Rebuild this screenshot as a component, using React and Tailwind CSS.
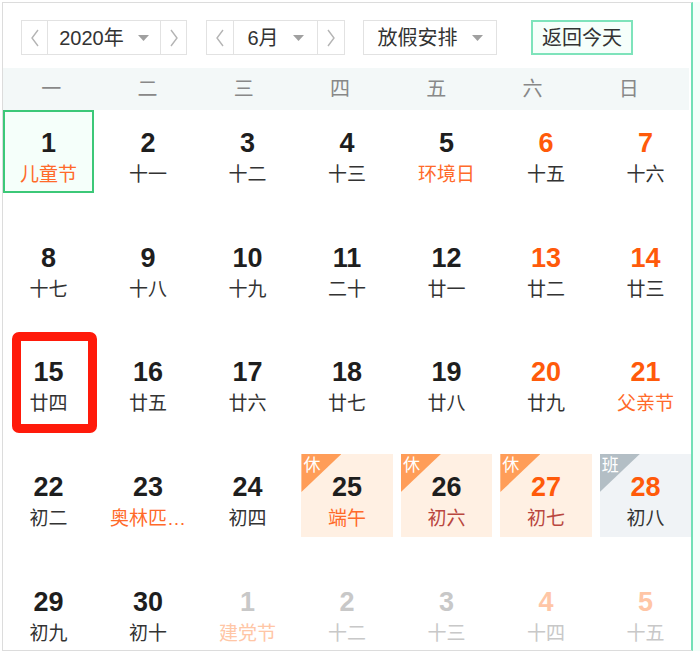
import React from 'react'

const weekDays = ['一', '二', '三', '四', '五', '六', '日']

const days = [
  { n: 1, l: '儿童节', fest: true, today: true },
  { n: 2, l: '十一' },
  { n: 3, l: '十二' },
  { n: 4, l: '十三' },
  { n: 5, l: '环境日', fest: true },
  { n: 6, l: '十五', weekend: true },
  { n: 7, l: '十六', weekend: true },
  { n: 8, l: '十七' },
  { n: 9, l: '十八' },
  { n: 10, l: '十九' },
  { n: 11, l: '二十' },
  { n: 12, l: '廿一' },
  { n: 13, l: '廿二', weekend: true },
  { n: 14, l: '廿三', weekend: true },
  { n: 15, l: '廿四' },
  { n: 16, l: '廿五' },
  { n: 17, l: '廿六' },
  { n: 18, l: '廿七' },
  { n: 19, l: '廿八' },
  { n: 20, l: '廿九', weekend: true },
  { n: 21, l: '父亲节', fest: true, weekend: true },
  { n: 22, l: '初二' },
  { n: 23, l: '奥林匹…', fest: true },
  { n: 24, l: '初四' },
  { n: 25, l: '端午', fest: true, badge: 'rest' },
  { n: 26, l: '初六', badge: 'rest' },
  { n: 27, l: '初七', weekend: true, badge: 'rest' },
  { n: 28, l: '初八', weekend: true, badge: 'work' },
  { n: 29, l: '初九' },
  { n: 30, l: '初十' },
  { n: 1, l: '建党节', next: true, fest: true },
  { n: 2, l: '十二', next: true },
  { n: 3, l: '十三', next: true },
  { n: 4, l: '十四', next: true, weekend: true },
  { n: 5, l: '十五', next: true, weekend: true },
]

const Chevron = ({ dir }) => (
  <svg width="10" height="20" viewBox="0 0 10 20">
    {dir === 'left' ? (
      <polyline points="8,2 2,10 8,18" fill="none" stroke="#b4b4b4" strokeWidth="1.4" />
    ) : (
      <polyline points="2,2 8,10 2,18" fill="none" stroke="#b4b4b4" strokeWidth="1.4" />
    )}
  </svg>
)

const Caret = () => (
  <svg width="11" height="6" viewBox="0 0 11 6">
    <polygon points="0,0 11,0 5.5,6" fill="#a0a0a0" />
  </svg>
)

const Stepper = ({ label, widths }) => (
  <div className="flex h-[35px] border border-[#e2e2e2] bg-white">
    <div className={`${widths[0]} flex items-center justify-center border-r border-[#e2e2e2]`}>
      <Chevron dir="left" />
    </div>
    <div className={`${widths[1]} flex items-center justify-center gap-[14px] border-r border-[#e2e2e2]`}>
      <span className="text-[20px] text-[#333]">{label}</span>
      <Caret />
    </div>
    <div className={`${widths[2]} flex items-center justify-center`}>
      <Chevron dir="right" />
    </div>
  </div>
)

const Cell = ({ day }) => {
  var numColor = 'text-[#1e1e1e]'
  var lunarColor = 'text-[#333]'
  if (day.weekend) numColor = 'text-[#ff5a0a]'
  if (day.fest) lunarColor = 'text-[#ff6a2a]'
  if (day.next) {
    numColor = day.weekend ? 'text-[#ffc6a6]' : 'text-[#c8c8c8]'
    lunarColor = day.fest ? 'text-[#ffc6a6]' : 'text-[#c8c8c8]'
  }
  if (day.badge === 'rest' && !day.fest) lunarColor = 'text-[#b9473f]'

  var box = 'bg-transparent'
  if (day.today) box = 'border-2 border-[#3cc878] bg-[#f5fffa]'
  if (day.badge === 'rest') box = 'bg-[#fff0e3]'
  if (day.badge === 'work') box = 'bg-[#f0f3f6]'

  return (
    <div className={`relative h-[83px] flex flex-col items-center ${day.today ? 'pt-[16px]' : 'pt-[18px]'} ${box}`}>
      {day.badge && (
        <div
          className={`absolute left-0 top-0 w-[40px] h-[38px] [clip-path:polygon(0_0,100%_0,0_100%)] ${
            day.badge === 'rest' ? 'bg-[#ff9d58]' : 'bg-[#b3bec5]'
          }`}
        >
          <span className="absolute left-[2px] top-[2px] text-[17px] leading-[20px] text-white">
            {day.badge === 'rest' ? '休' : '班'}
          </span>
        </div>
      )}
      <span className={`text-[27px] leading-[30px] font-bold ${numColor}`}>{day.n}</span>
      <span className={`mt-[5px] text-[19px] leading-[24px] whitespace-nowrap ${lunarColor}`}>{day.l}</span>
    </div>
  )
}

const App = () => {
  return (
    <div
      className="relative flex w-[700px] h-[653px] bg-white overflow-hidden"
      style={{ fontFamily: '"Liberation Sans", "Noto Sans CJK SC", sans-serif' }}
    >
      <div className="mt-[2px] ml-[2px] w-[691px] h-[649px] shrink-0 overflow-hidden border-l border-t border-b border-[#dcdcdc] border-r-2 border-r-[#72e0b6]">
        {/* toolbar */}
        <div className="flex items-center pl-[18px] pt-[17px]">
          <Stepper label="2020年" widths={['w-[26px]', 'w-[113px]', 'w-[25px]']} />
          <div className="ml-[19px]">
            <Stepper label="6月" widths={['w-[27px]', 'w-[84px]', 'w-[26px]']} />
          </div>
          <div className="ml-[18px] w-[134px] h-[35px] flex items-center justify-center gap-[14px] border border-[#e2e2e2]">
            <span className="text-[20px] text-[#333]">放假安排</span>
            <Caret />
          </div>
          <button className="ml-[34px] w-[102px] h-[35px] flex items-center justify-center border-2 border-[#7ee3bb] bg-[#f6fffb] text-[20px] text-[#333]">
            返回今天
          </button>
        </div>

        {/* week header */}
        <div className="mt-[13px] h-[42px] w-[686px] bg-[#f3f8f8]">
          <div className="grid grid-cols-7 w-[674px] h-full items-center">
            {weekDays.map(w => (
              <div key={w} className="text-center text-[20px] text-[#888]">{w}</div>
            ))}
          </div>
        </div>

        {/* days */}
        <div className="grid grid-cols-7 w-[688px] gap-x-[8.3px] gap-y-[31.7px]">
          {days.map((day, idx) => (
            <Cell key={idx} day={day} />
          ))}
        </div>
      </div>
      <div className="flex-1 mt-[2px] h-[649px] bg-[#f3fffa]"></div>

      {/* red marker around the 15th */}
      <div className="absolute left-[12px] top-[332px] w-[85px] h-[101px] border-[9px] border-[#ff1a0a] rounded-[7px]"></div>
    </div>
  )
}

export default App
